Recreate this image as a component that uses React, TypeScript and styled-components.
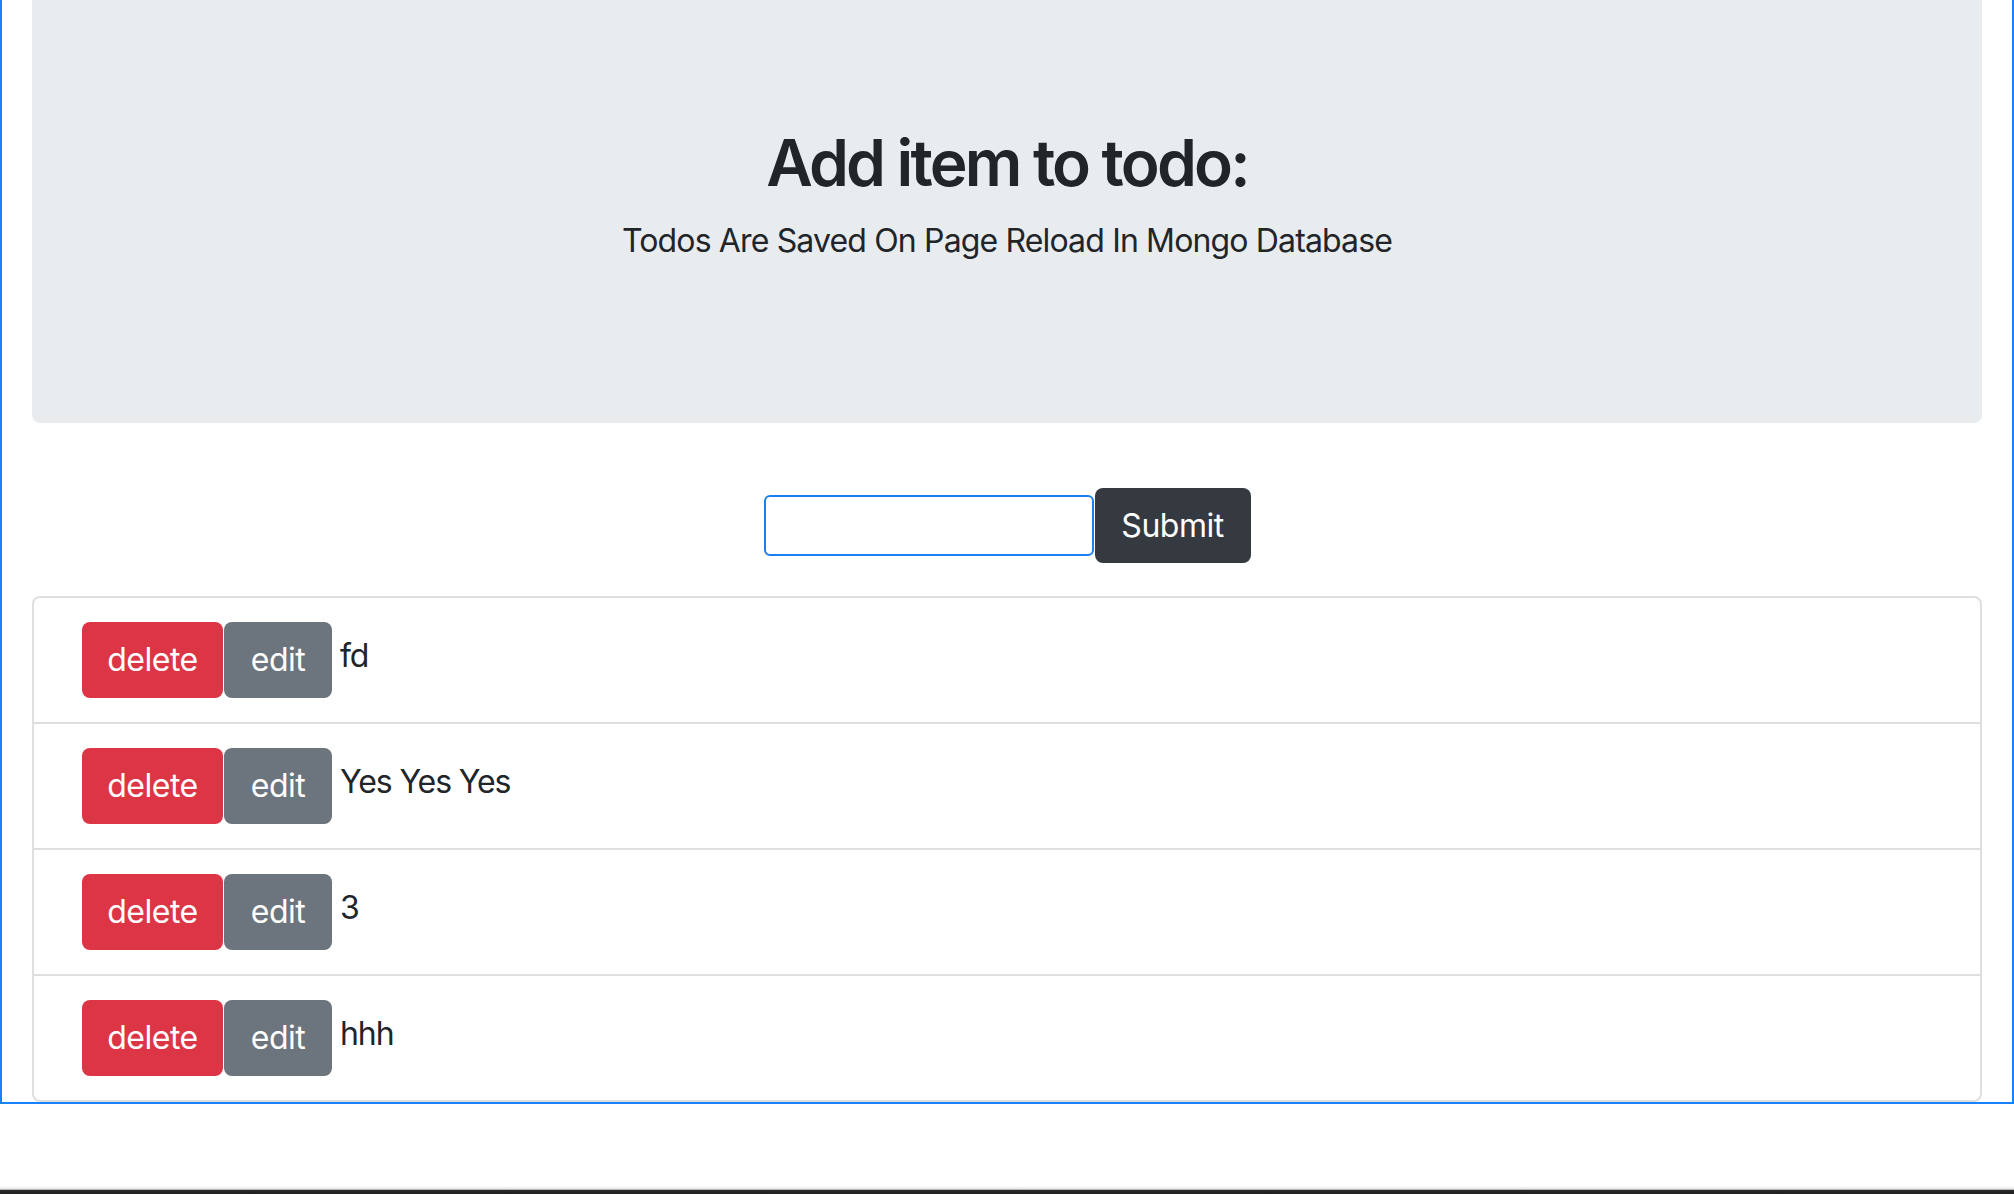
import React from "react";
import styled, { createGlobalStyle } from "styled-components";

const GlobalStyle = createGlobalStyle`
  html, body {
    margin: 0;
    padding: 0;
    background: #ffffff;
  }
  body {
    font-family: Inter, "Noto Sans", "Liberation Sans", sans-serif;
    color: #212529;
  }
  * { box-sizing: border-box; }
`;

const Page = styled.div`
  min-height: 1194px;
  display: flex;
  flex-direction: column;
`;

const Frame = styled.div`
  border: 2px solid #1b80fb;
  border-top: none;
  padding: 0 30px;
`;

const Jumbotron = styled.header`
  background: #e9ecef;
  border-radius: 0 0 8px 8px;
  padding: 125px 32px 158px;
  text-align: center;
  margin-bottom: 65px;
`;

const Title = styled.h1`
  margin: 0 0 15px;
  font-size: 64px;
  font-weight: 600;
  line-height: 1.2;
  letter-spacing: -2.8px;
  color: #212529;
`;

const Lead = styled.p`
  margin: 0;
  font-size: 32px;
  font-weight: 400;
  line-height: 1.5;
  letter-spacing: -0.85px;
  color: #212529;
`;

const Form = styled.form`
  display: flex;
  justify-content: center;
  align-items: center;
  margin-bottom: 33px;
`;

const TextInput = styled.input`
  width: 330px;
  height: 61px;
  border: 2px solid #1a7ff2;
  border-radius: 6px;
  background: #fff;
  outline: none;
  font-size: 28px;
  padding: 0 12px;
`;

const Button = styled.button<{ $bg: string; $w: number }>`
  display: inline-flex;
  align-items: center;
  justify-content: center;
  width: ${(p) => p.$w}px;
  height: 76px;
  padding: 0;
  border: none;
  border-radius: 8px;
  background: ${(p) => p.$bg};
  color: #ffffff;
  font-family: Inter, "Noto Sans", "Liberation Sans", sans-serif;
  font-size: 32px;
  font-weight: 400;
  letter-spacing: -0.5px;
  cursor: pointer;
`;

const SubmitButton = styled(Button)`
  height: 75px;
  margin-left: 1px;
`;

const List = styled.ul`
  list-style: none;
  margin: 0;
  padding: 0;
  border: 2px solid #dfdfdf;
  border-radius: 8px;
`;

const Row = styled.li`
  display: flex;
  align-items: center;
  padding: 24px 48px;
  & + & {
    border-top: 2px solid #dfdfdf;
  }
`;

const Actions = styled.div`
  display: flex;
  gap: 1px;
`;

const ItemText = styled.span`
  margin-left: 8px;
  margin-bottom: 8px;
  font-size: 32px;
  letter-spacing: -1.1px;
  color: #212529;
`;

const Spacer = styled.div`
  flex: 1;
`;

const BottomEdge = styled.div`
  height: 8px;
  background: linear-gradient(
    to bottom,
    #ffffff 0%,
    #e4e4e4 40%,
    #2a2a2a 55%,
    #1f1f1f 100%
  );
`;

const todos = ["fd", "Yes Yes Yes", "3", "hhh"];

export default function App() {
  return (
    <Page>
      <GlobalStyle />
      <Frame>
        <Jumbotron>
          <Title>Add item to todo:</Title>
          <Lead>Todos Are Saved On Page Reload In Mongo Database</Lead>
        </Jumbotron>
        <Form onSubmit={(e) => e.preventDefault()}>
          <TextInput type="text" />
          <SubmitButton type="submit" $bg="#343a40" $w={156}>
            Submit
          </SubmitButton>
        </Form>
        <List>
          {todos.map((t, i) => (
            <Row key={i}>
              <Actions>
                <Button type="button" $bg="#dc3545" $w={141}>
                  delete
                </Button>
                <Button type="button" $bg="#6c757d" $w={108}>
                  edit
                </Button>
              </Actions>
              <ItemText>{t}</ItemText>
            </Row>
          ))}
        </List>
      </Frame>
      <Spacer />
      <BottomEdge />
    </Page>
  );
}
